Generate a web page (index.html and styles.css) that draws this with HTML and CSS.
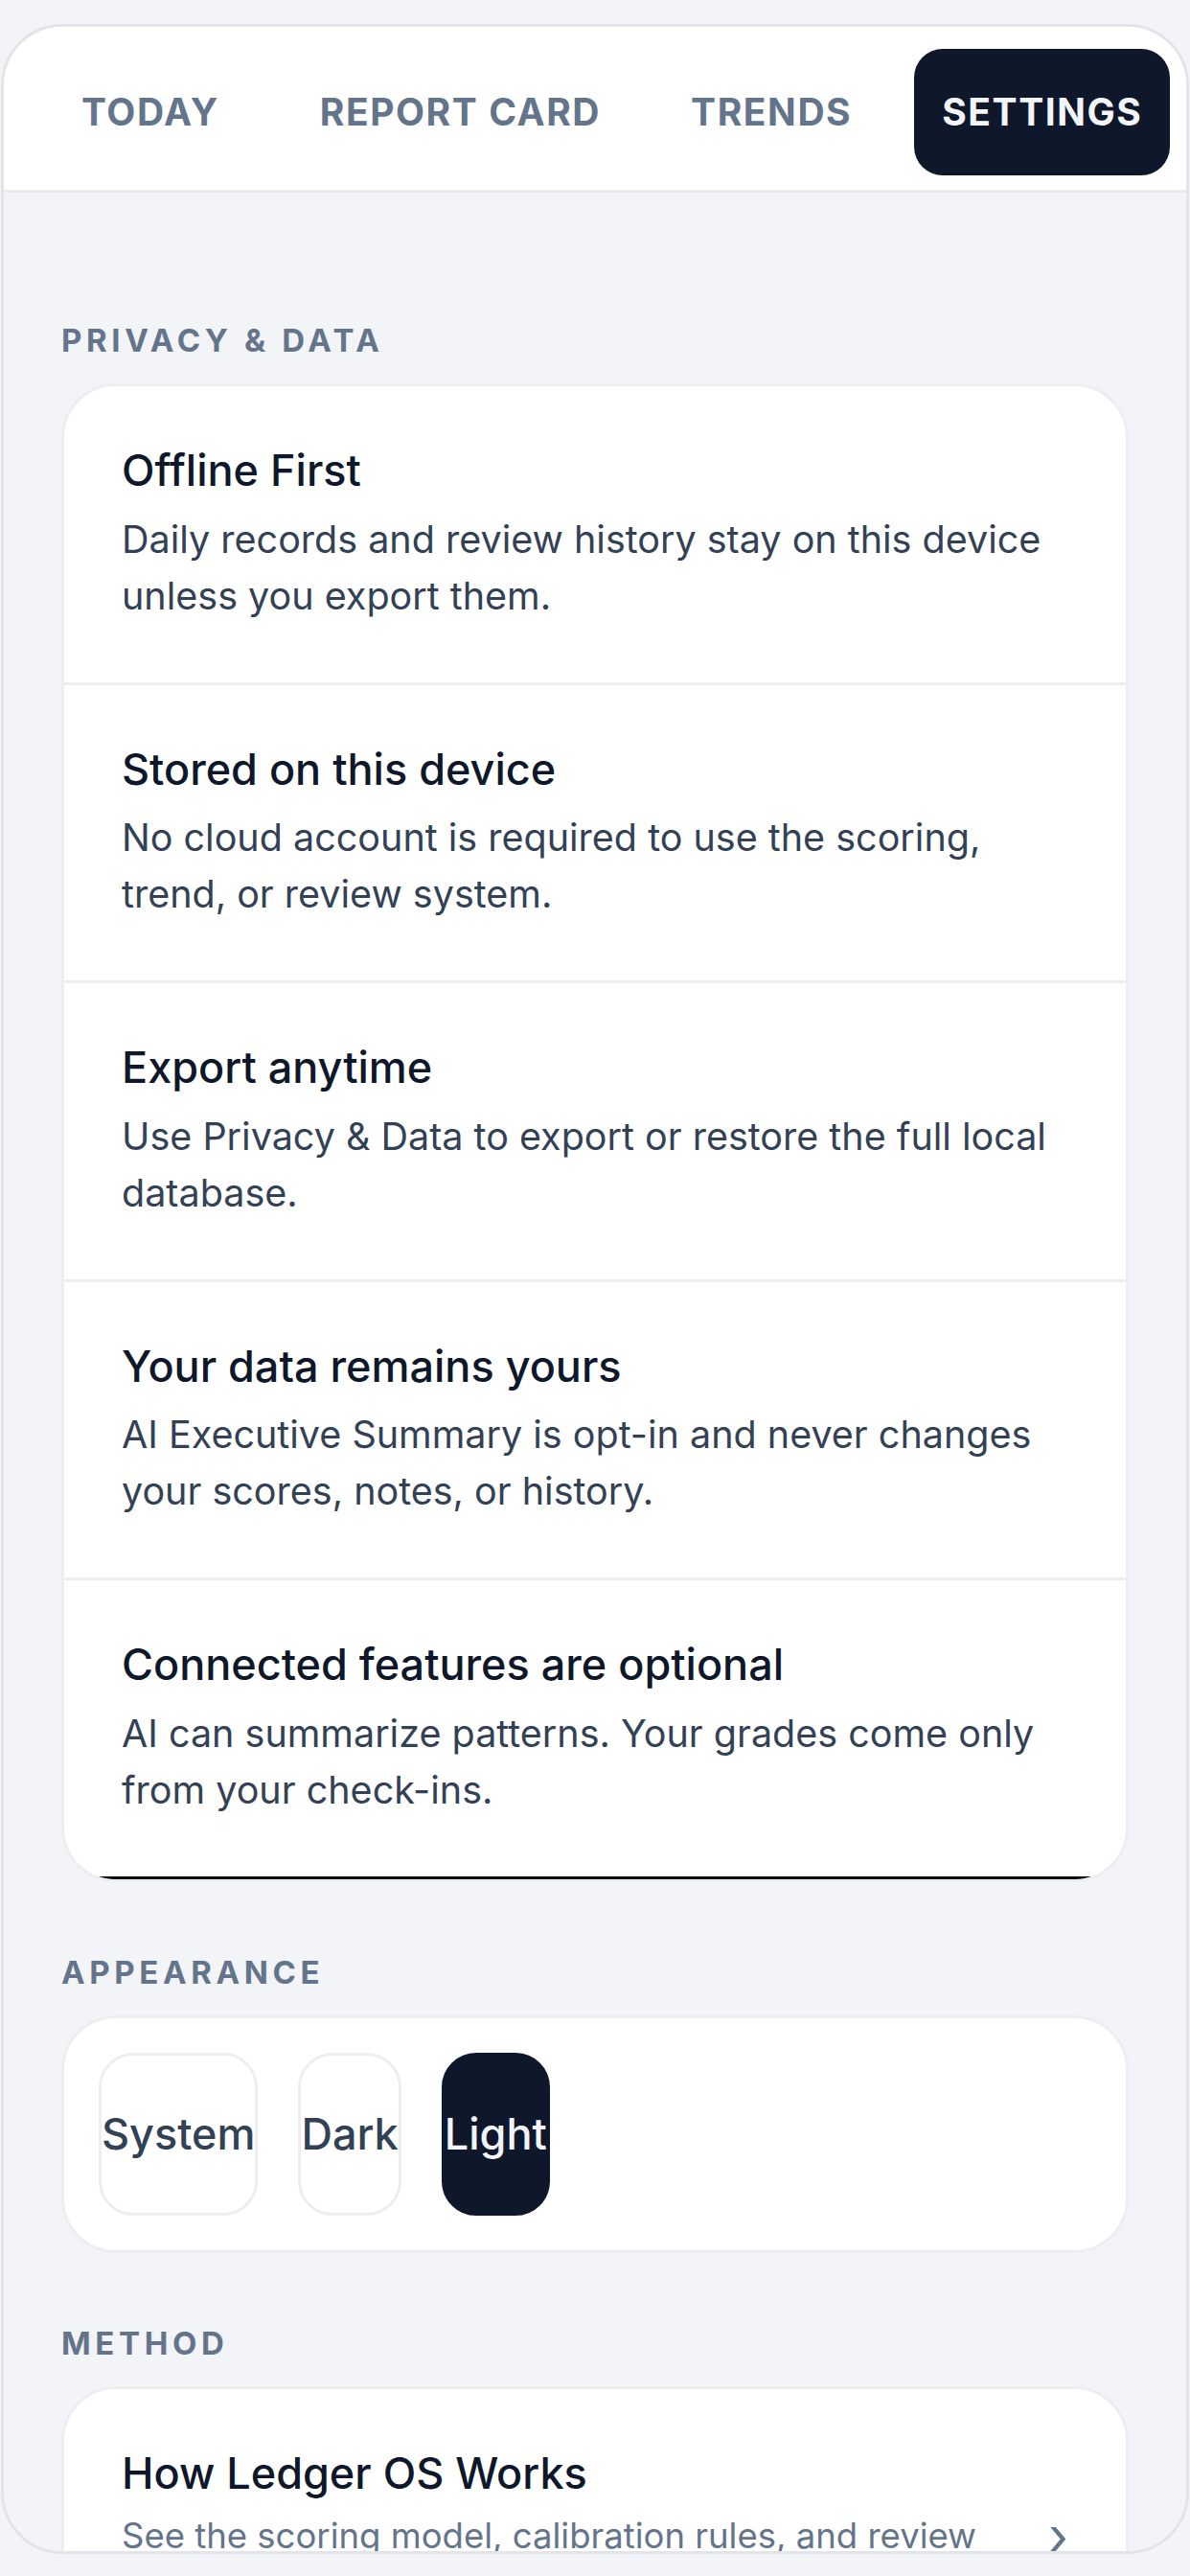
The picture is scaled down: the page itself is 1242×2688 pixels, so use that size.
FILE: index.html
```html
<!DOCTYPE html>
<html lang="en">
<head>
<meta charset="utf-8">
<title>Settings</title>
<link rel="stylesheet" href="styles.css">
</head>
<body>
<div class="frame">
  <nav class="tabs">
    <button class="tab">TODAY</button>
    <button class="tab">REPORT CARD</button>
    <button class="tab">TRENDS</button>
    <button class="tab tab--active">SETTINGS</button>
  </nav>
  <main class="content">
    <section class="section">
      <h2 class="section-label">PRIVACY &amp; DATA</h2>
      <div class="card list-card">
        <div class="row">
          <h3 class="row-title">Offline First</h3>
          <p class="row-desc">Daily records and review history stay on this device unless you export them.</p>
        </div>
        <div class="row">
          <h3 class="row-title">Stored on this device</h3>
          <p class="row-desc">No cloud account is required to use the scoring, trend, or review system.</p>
        </div>
        <div class="row">
          <h3 class="row-title">Export anytime</h3>
          <p class="row-desc">Use Privacy &amp; Data to export or restore the full local database.</p>
        </div>
        <div class="row">
          <h3 class="row-title">Your data remains yours</h3>
          <p class="row-desc">AI Executive Summary is opt-in and never changes your scores, notes, or history.</p>
        </div>
        <div class="row">
          <h3 class="row-title">Connected features are optional</h3>
          <p class="row-desc">AI can summarize patterns. Your grades come only from your check-ins.</p>
        </div>
      </div>
    </section>
    <section class="section">
      <h2 class="section-label">APPEARANCE</h2>
      <div class="card segment-card">
        <button class="segment">System</button>
        <button class="segment">Dark</button>
        <button class="segment segment--active">Light</button>
      </div>
    </section>
    <section class="section">
      <h2 class="section-label">METHOD</h2>
      <div class="card list-card">
        <div class="row row--link">
          <div class="row-text">
            <h3 class="row-title">How Ledger OS Works</h3>
            <p class="row-desc row-desc--muted">See the scoring model, calibration rules, and review cadence.</p>
          </div>
          <span class="chevron">›</span>
        </div>
      </div>
    </section>
  </main>
</div>
</body>
</html>
```
FILE: styles.css
```css
* { box-sizing: border-box; }
html, body { margin: 0; padding: 0; }
body {
  background: #f2f4f7;
  font-family: Inter, "Noto Sans", "Liberation Sans", sans-serif;
  color: #0f172a;
}
.frame {
  margin: 25px 1px 0;
  height: 2640px;
  border: 3px solid #e2e4e9;
  border-radius: 64px;
  overflow: hidden;
  background: #f2f4f7;
  display: flex;
  flex-direction: column;
}
.tabs {
  flex: none;
  display: flex;
  align-items: center;
  gap: 36px;
  padding: 23px 0 15px 52px;
  background: #ffffff;
  border-bottom: 3px solid #e8eaee;
}
.tab {
  border: 0;
  background: transparent;
  font-family: inherit;
  font-size: 39px;
  font-weight: 700;
  letter-spacing: 0.04em;
  line-height: 48px;
  padding: 42px 29px;
  color: #64748b;
  border-radius: 30px;
  white-space: nowrap;
}
.tab:first-child {
  margin-right: 11px;
}
.tab--active {
  background: #0f172a;
  color: #f1f5f9;
}
.content {
  flex: 1;
  display: flex;
  flex-direction: column;
  gap: 74px;
  padding: 134px 60px 0;
}
.section-label {
  margin: 0 0 25px;
  font-size: 33px;
  line-height: 40px;
  font-weight: 700;
  letter-spacing: 0.14em;
  color: #64748b;
}
.card {
  background: #ffffff;
  border: 3px solid #eceef1;
  border-radius: 57px;
  overflow: hidden;
}
.row {
  padding: 60px 60px;
  border-bottom: 3px solid #eceef1;
}
.list-card .row:last-child {
  border-bottom-color: #000000;
}
.row-title {
  margin: 0 0 15.5px;
  font-size: 45px;
  line-height: 55px;
  font-weight: 500;
  color: #0f172a;
}
.row-desc {
  margin: 0;
  font-size: 39.5px;
  line-height: 59px;
  font-weight: 400;
  color: #334155;
}
.row--link {
  display: flex;
  align-items: center;
  gap: 40px;
}
.row-text {
  flex: 1;
  min-width: 0;
}
.row-title + .row-desc--muted {
  margin-top: -4px;
}
.row-desc--muted {
  font-size: 36.5px;
  line-height: 54px;
  color: #64748b;
}
.chevron {
  flex: none;
  font-size: 54px;
  line-height: 1;
  color: #64748b;
  margin-top: 14px;
}
.segment-card {
  display: flex;
  align-items: center;
  gap: 42px;
  padding: 36px;
}
.segment {
  height: 170px;
  padding: 0;
  border: 3px solid #eceef0;
  border-radius: 36px;
  background: #ffffff;
  font-family: inherit;
  font-size: 45px;
  font-weight: 500;
  color: #334155;
}
.segment--active {
  background: #0f172a;
  border-color: #0f172a;
  color: #f1f5f9;
}
```
